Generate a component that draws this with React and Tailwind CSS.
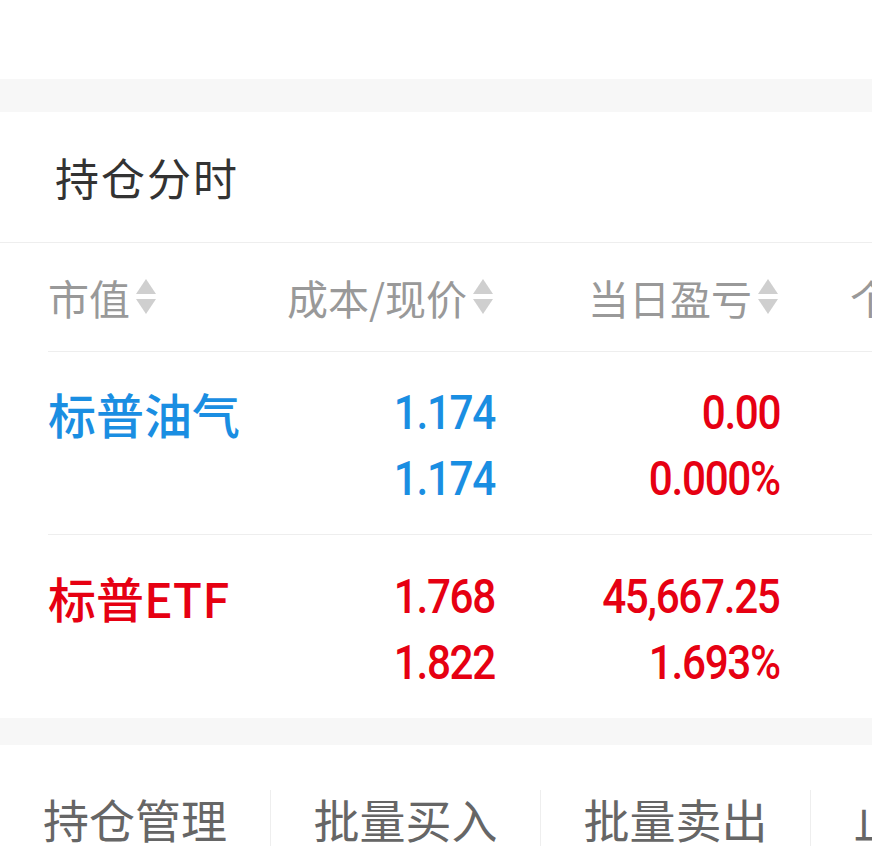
import React from 'react';

const CJK = '"Noto Sans CJK SC", "Noto Sans", sans-serif';
const NUM = 'Roboto, "Noto Sans CJK SC", sans-serif';

function SortIcon() {
  return (
    <svg width="24" height="38" viewBox="0 0 24 38" className="ml-[4px] shrink-0">
      <polygon points="12,1 22,16 2,16" fill="#cfcfcf" />
      <polygon points="2,21 22,21 12,36" fill="#cfcfcf" />
    </svg>
  );
}

function Num({ children, color }) {
  return (
    <span
      className="inline-block text-[48px] leading-none font-medium tracking-[-1.5px] scale-x-[0.88] origin-right"
      style={{ fontFamily: NUM, color }}
    >
      {children}
    </span>
  );
}

const rows = [
  { name: '标普油气', color: '#1a8ee2', cost: '1.174', sub: '1.174', pl: '0.00', pct: '0.000%' },
  { name: '标普ETF', color: '#e60012', cost: '1.768', sub: '1.822', pl: '45,667.25', pct: '1.693%' },
];

export default function App() {
  return (
    <div className="w-[872px] h-[867px] overflow-hidden bg-white" style={{ fontFamily: CJK }}>
      {/* top blank */}
      <div className="h-[79px] bg-white" />
      <div className="h-[33px] bg-[#f7f7f7]" />

      {/* card */}
      <div className="bg-white">
        <div className="h-[131px] flex items-center pl-[55px] border-b border-[#eeeeee]">
          <span className="text-[44px] leading-none text-[#333333] tracking-[2px]">持仓分时</span>
        </div>

        <div className="pl-[48px]">
          {/* header */}
          <div className="h-[109px] flex items-center border-b border-[#eeeeee] w-[1200px] text-[#999999] text-[41px] leading-none">
            <div className="w-[202px] flex items-center">
              <span>市值</span>
              <SortIcon />
            </div>
            <div className="w-[245px] flex items-center justify-end">
              <span>成本/现价</span>
              <SortIcon />
            </div>
            <div className="w-[285px] flex items-center justify-end">
              <span>当日盈亏</span>
              <SortIcon />
            </div>
            <div className="flex items-center pl-[70px]">
              <span>个股仓位</span>
              <SortIcon />
            </div>
          </div>

          {rows.map((r, i) => (
            <div
              key={r.name}
              className={`h-[183px] pt-[6px] flex flex-col justify-center w-[1200px] ${i === 0 ? 'border-b border-[#eeeeee]' : ''}`}
            >
              <div className="flex items-center h-[66px]">
                <div className="w-[202px] text-[48px] leading-none font-medium" style={{ color: r.color }}>{r.name}</div>
                <div className="w-[245px] text-right"><Num color={r.color}>{r.cost}</Num></div>
                <div className="w-[285px] text-right"><Num color="#e60012">{r.pl}</Num></div>
              </div>
              <div className="flex items-center h-[66px]">
                <div className="w-[202px]" />
                <div className="w-[245px] text-right"><Num color={r.color}>{r.sub}</Num></div>
                <div className="w-[285px] text-right"><Num color="#e60012">{r.pct}</Num></div>
              </div>
            </div>
          ))}
        </div>
      </div>

      <div className="h-[27px] bg-[#f7f7f7]" />

      {/* bottom actions */}
      <div className="h-[122px] pt-[24px] flex items-center w-[1100px] text-[#666666] text-[46px] leading-none">
        {['持仓管理', '批量买入', '批量卖出', '止盈止损'].map((t, i) => (
          <div key={t} className={`w-[270px] h-[56px] flex items-center justify-center ${i > 0 ? 'border-l border-[#eeeeee]' : ''}`}>
            {t}
          </div>
        ))}
      </div>
    </div>
  );
}
